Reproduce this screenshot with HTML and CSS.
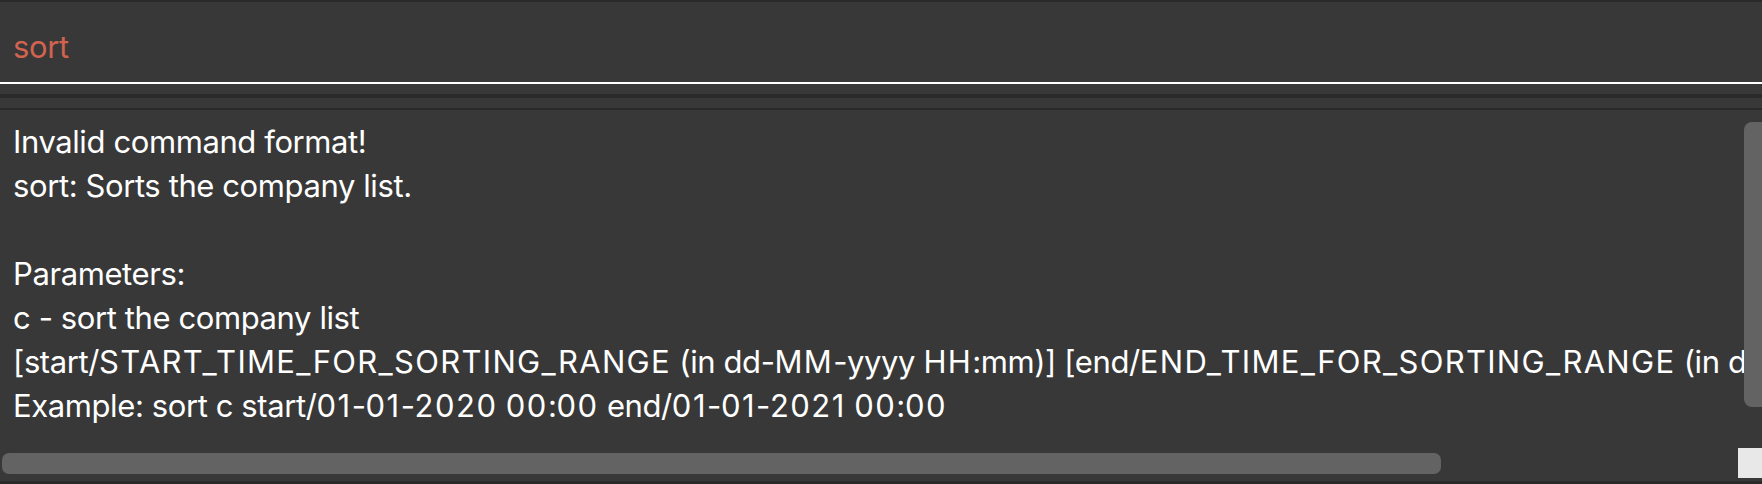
FILE: index.html
```html
<!DOCTYPE html>
<html lang="en">
<head>
<meta charset="utf-8">
<title>sort</title>
<link rel="stylesheet" href="styles.css">
</head>
<body>
<div class="app">
  <div class="edge-top"></div>
  <div class="command">
    <div class="command-text">sort</div>
  </div>
  <div class="spacer"></div>
  <div class="divider thick"></div>
  <div class="spacer"></div>
  <div class="divider thin"></div>
  <div class="result">
    <div class="result-text">
      <div class="line">Invalid command format!</div>
      <div class="line">sort: Sorts the company list.</div>
      <div class="line">&nbsp;</div>
      <div class="line">Parameters:</div>
      <div class="line">c - sort the company list</div>
      <div class="line">[start/<span class="caps">START_TIME_FOR_SORTING_RANGE</span> (in dd-<span class="caps">MM</span>-yyyy <span class="caps">HH</span>:mm)] [end/<span class="caps">END_TIME_FOR_SORTING_RANGE</span> (in dd-<span class="caps">MM</span>-yyyy <span class="caps">HH</span>:mm)]</div>
      <div class="line">Example: sort c start/<span class="num">01</span>-<span class="num">01</span>-<span class="num">2020</span> <span class="num">00</span>:<span class="num">00</span> end/<span class="num">01</span>-<span class="num">01</span>-<span class="num">2021</span> <span class="num">00</span>:<span class="num">00</span></div>
    </div>
    <div class="vthumb"></div>
    <div class="hthumb"></div>
    <div class="corner"></div>
  </div>
  <div class="edge-bottom"></div>
</div>
</body>
</html>
```
FILE: styles.css
```css
html, body {
  margin: 0;
  padding: 0;
  background: #383838;
  overflow: hidden;
}
.app {
  width: 1762px;
  height: 484px;
  display: flex;
  flex-direction: column;
  background: #383838;
  font-family: "Inter", "Liberation Sans", sans-serif;
  overflow: hidden;
}
.edge-top {
  height: 2px;
  background: #2a2a2a;
}
.command {
  height: 80px;
  border-bottom: 2px solid #ffffff;
  box-sizing: content-box;
}
.command-text {
  padding: 5px 0 0 13px;
  font-size: 31px;
  line-height: 80px;
  height: 75px;
  color: #d1634f;
  letter-spacing: -0.4px;
}
.spacer {
  height: 10px;
}
.divider {
  background: #2a2a2a;
}
.divider.thick { height: 4px; }
.divider.thin { height: 2px; }
.result {
  position: relative;
  height: 371px;
  overflow: hidden;
}
.result-text {
  padding: 10px 0 0 13px;
  color: #ffffff;
  font-size: 31px;
  line-height: 44px;
  white-space: nowrap;
  letter-spacing: -0.4px;
  width: 1731px;
  overflow: hidden;
}
.caps {
  letter-spacing: 1.3px;
}
.num {
  letter-spacing: 1.5px;
}
.vthumb {
  position: absolute;
  left: 1744px;
  top: 12px;
  width: 24px;
  height: 285px;
  background: #636363;
  border-radius: 8px;
}
.hthumb {
  position: absolute;
  left: 2px;
  top: 343px;
  width: 1439px;
  height: 21px;
  background: #636363;
  border-radius: 7px;
}
.corner {
  position: absolute;
  left: 1738px;
  top: 338px;
  width: 24px;
  height: 30px;
  background: #e8e8e8;
}
.edge-bottom {
  flex: 1;
  background: #2a2a2a;
}
```
